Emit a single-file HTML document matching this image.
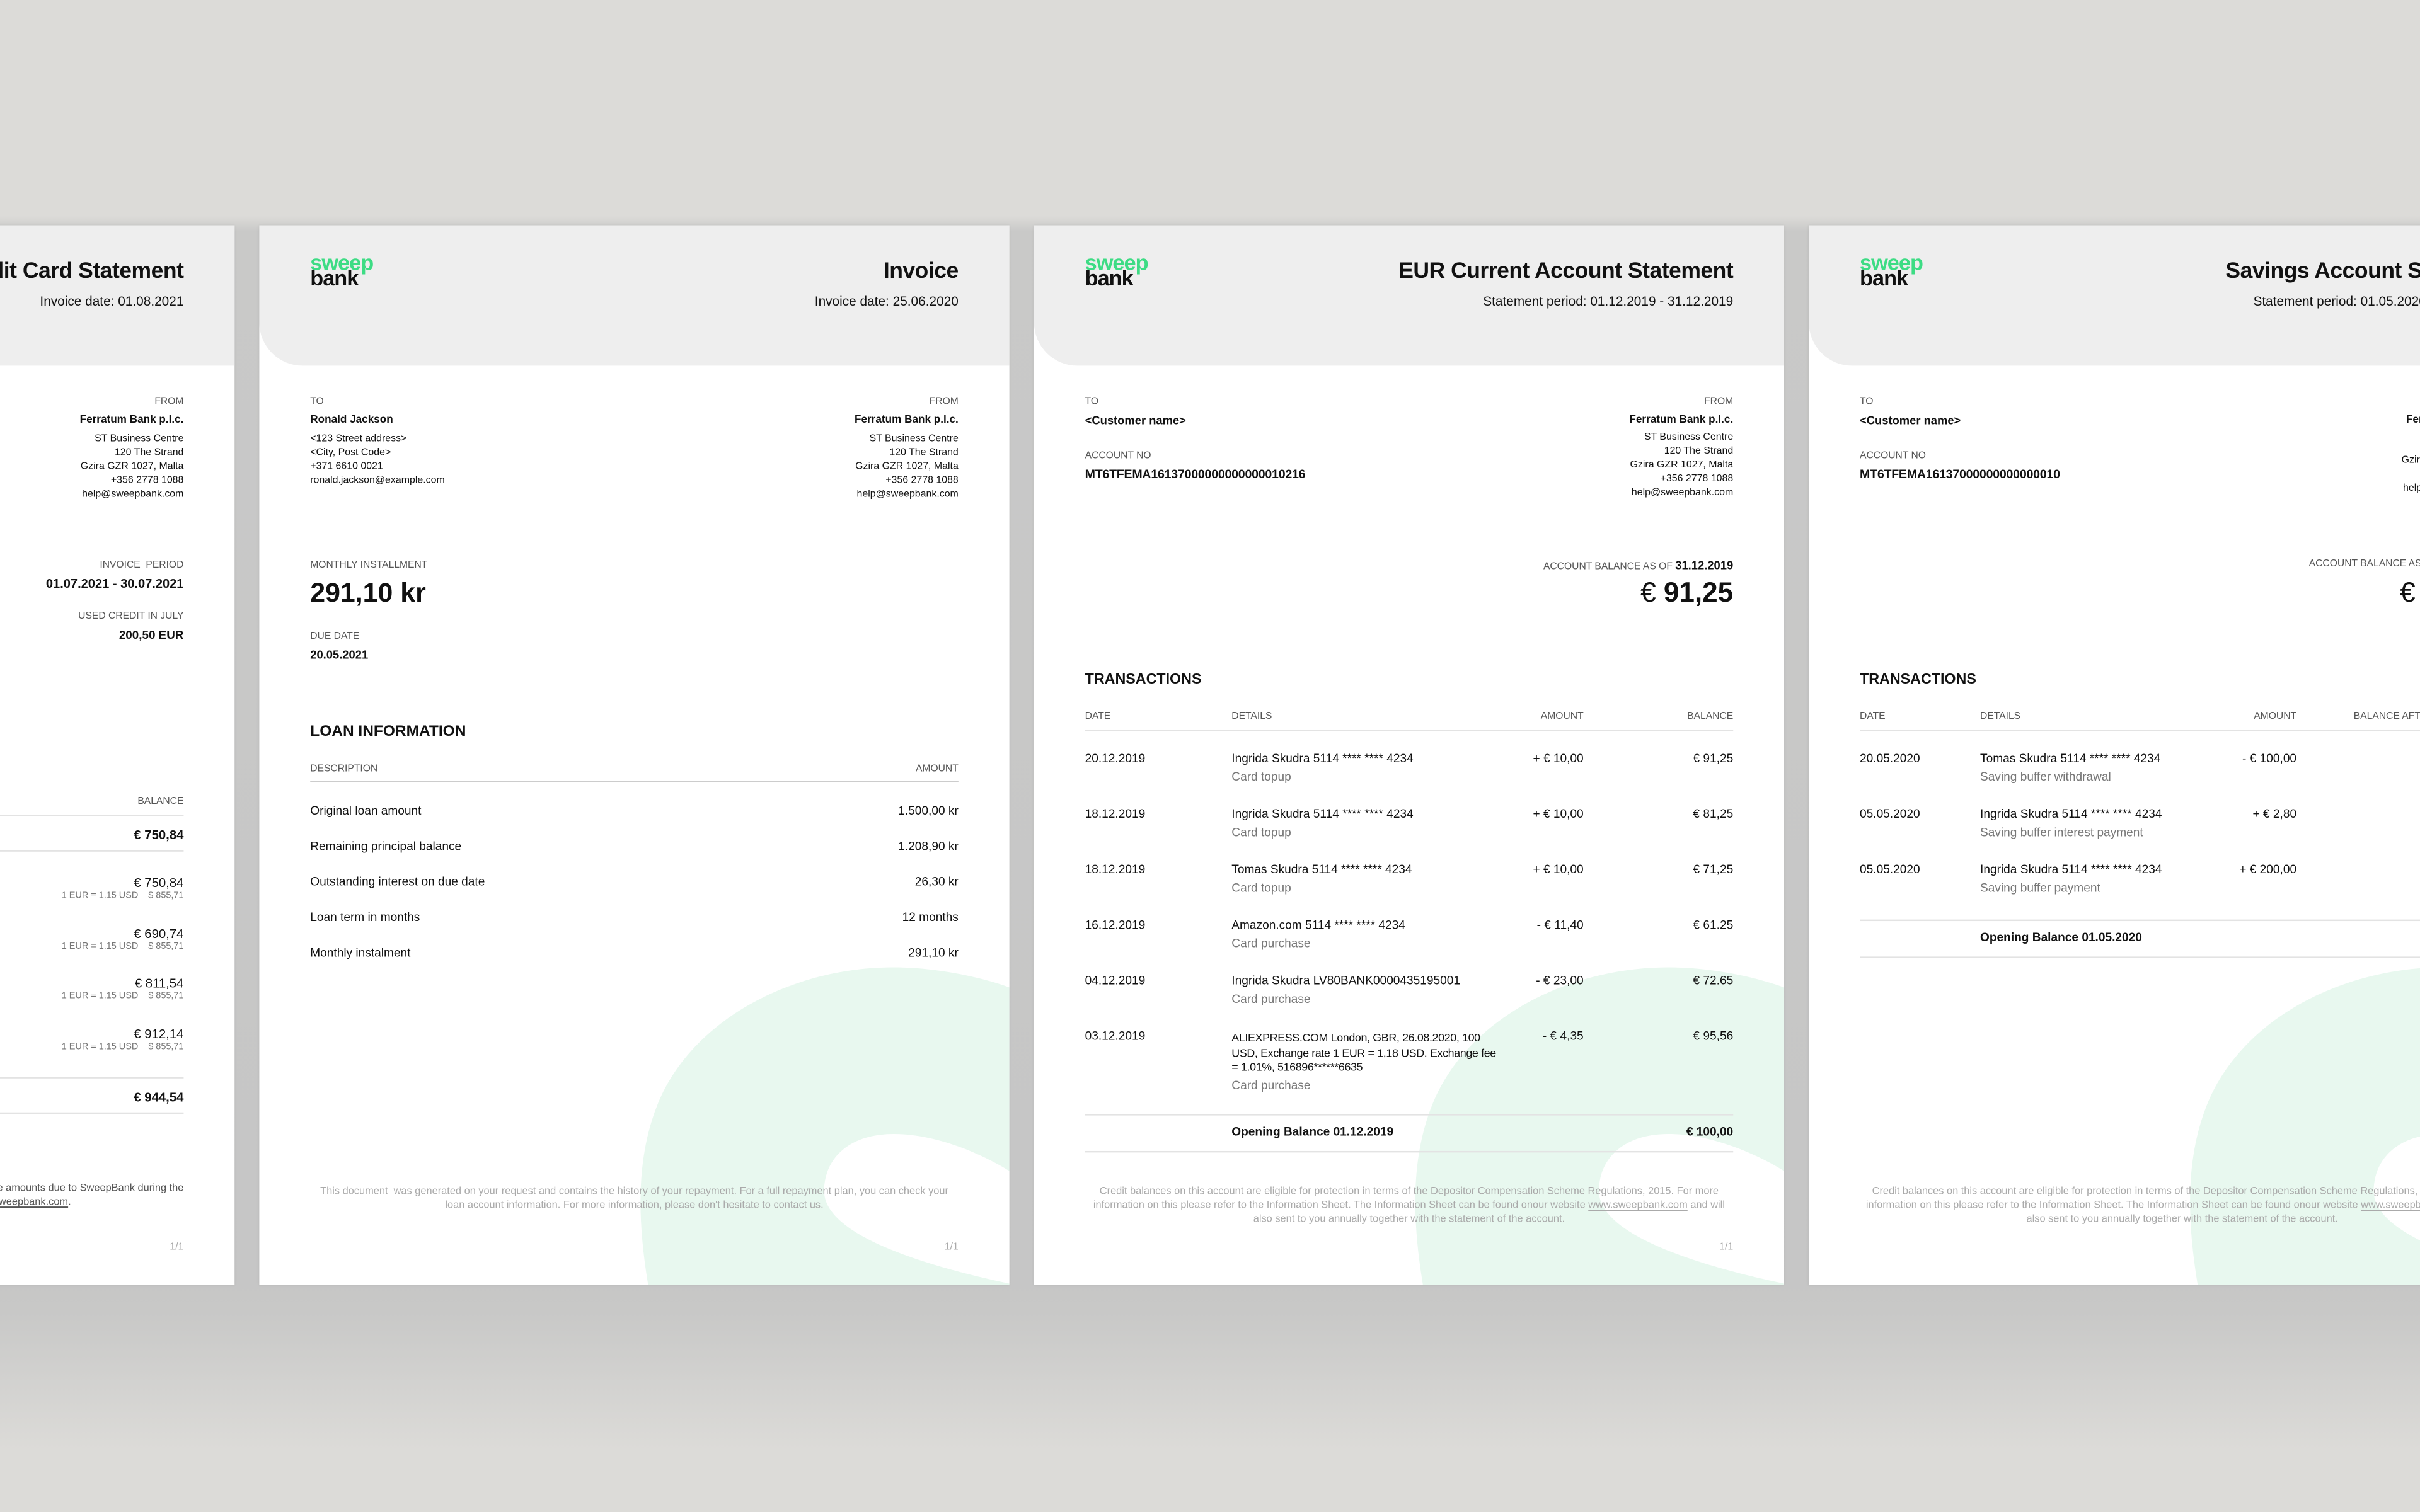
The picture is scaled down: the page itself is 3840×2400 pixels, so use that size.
<!DOCTYPE html>
<html><head><meta charset="utf-8">
<style>
*{margin:0;padding:0;box-sizing:border-box}
html,body{width:3840px;height:2400px;overflow:hidden;background:#dcdbd8}
#w{position:absolute;left:0;top:0;width:1568px;height:980px;transform:scale(2.44898);transform-origin:0 0;font-family:"Liberation Sans",sans-serif;color:#111;
background:linear-gradient(to bottom,#dcdbd8 0,#dcdbd8 140px,#c9c9c8 150px,#c6c6c6 830px,#c8c8c7 850px,#dcdbd8 940px,#dcdbd8 980px)}
.p{position:absolute;top:146px;width:486px;height:687px;background:#fff;overflow:hidden;box-shadow:0 0 2px rgba(0,0,0,.08)}
.hd{position:absolute;left:0;top:0;width:486px;height:91px;background:#eeeeee;border-bottom-left-radius:28px}
.t{position:absolute;white-space:nowrap;line-height:1}
.r{text-align:right}
.logo{position:absolute;left:33px;top:19px;font-weight:bold;font-size:14px;line-height:10px;letter-spacing:-0.4px}
.logo .g{color:#3ddc84;display:block}
.ttl{font-size:14.5px;font-weight:bold;letter-spacing:-0.2px}
.sub{font-size:8.5px}
.lb{font-size:6.4px;color:#555}
.b{font-weight:bold}
.s7{font-size:7px}
.s65{font-size:6.5px}
.m{font-size:7.8px}
.gr{color:#777}
.ln{position:absolute;height:1px;background:#e3e3e3}
.ft{position:absolute;font-size:6.7px;color:#aaa;text-align:center;line-height:9px;white-space:nowrap}
svg.wm{position:absolute;left:0;top:0}
</style></head><body><div id="w">

<!-- PAGE 1 -->
<div class="p" style="left:-334px">
<div class="hd"></div>
<div class="t ttl r" style="right:33px;top:23px">Credit Card Statement</div>
<div class="t sub r" style="right:33px;top:45px">Invoice date: 01.08.2021</div>
<div class="t lb r" style="right:33px;top:112px">FROM</div>
<div class="t s7 b r" style="right:33px;top:123px">Ferratum Bank p.l.c.</div>
<div class="t s65 r" style="right:33px;top:134px;line-height:9px">ST Business Centre<br>120 The Strand<br>Gzira GZR 1027, Malta<br>+356 2778 1088<br>help@sweepbank.com</div>
<div class="t lb r" style="right:33px;top:218px">INVOICE&nbsp; PERIOD</div>
<div class="t b r" style="right:33px;top:229px;font-size:8.2px">01.07.2021 - 30.07.2021</div>
<div class="t lb r" style="right:33px;top:251px">USED CREDIT IN JULY</div>
<div class="t b r" style="right:33px;top:262px;font-size:7.7px">200,50 EUR</div>
<div class="t lb r" style="right:33px;top:371px">BALANCE</div>
<div class="ln" style="left:0;width:453px;top:382px"></div>
<div class="t b r" style="right:33px;top:391px;font-size:8.3px">€ 750,84</div>
<div class="ln" style="left:0;width:453px;top:405px"></div>
<div class="t r" style="right:33px;top:422px;font-size:8.3px">€ 750,84</div>
<div class="t r gr" style="right:33px;top:433px;font-size:5.9px">1 EUR = 1.15 USD &nbsp;&nbsp; $ 855,71</div>
<div class="t r" style="right:33px;top:455px;font-size:8.3px">€ 690,74</div>
<div class="t r gr" style="right:33px;top:466px;font-size:5.9px">1 EUR = 1.15 USD &nbsp;&nbsp; $ 855,71</div>
<div class="t r" style="right:33px;top:487px;font-size:8.3px">€ 811,54</div>
<div class="t r gr" style="right:33px;top:498px;font-size:5.9px">1 EUR = 1.15 USD &nbsp;&nbsp; $ 855,71</div>
<div class="t r" style="right:33px;top:520px;font-size:8.3px">€ 912,14</div>
<div class="t r gr" style="right:33px;top:531px;font-size:5.9px">1 EUR = 1.15 USD &nbsp;&nbsp; $ 855,71</div>
<div class="ln" style="left:0;width:453px;top:552px"></div>
<div class="t b r" style="right:33px;top:561px;font-size:8.3px">€ 944,54</div>
<div class="ln" style="left:0;width:453px;top:575px"></div>
<div class="t r" style="right:33px;top:622px;font-size:6.7px;color:#555">You can see all the amounts due to SweepBank during the</div>
<div class="t r" style="right:106px;top:631px;font-size:6.7px;color:#555">period on <u>www.sweepbank.com</u>.</div>
<div class="t r" style="right:33px;top:660px;font-size:6.5px;color:#aaa">1/1</div>
</div>

<!-- PAGE 2 -->
<div class="p" style="left:168px">
<svg class="wm" width="486" height="687"><path d="M252 687 C245 645 244 605 258 570 C280 515 345 481 411 481 C440 481 470 488 486 494 L486 613 C470 603 440 589 411 589 C382 589 366 605 366 626 C366 652 420 672 486 686 L486 687 Z" fill="#e8f8ef"/></svg>
<div class="hd"></div>
<div class="logo"><span class="g">sweep</span>bank</div>
<div class="t ttl r" style="right:33px;top:23px">Invoice</div>
<div class="t sub r" style="right:33px;top:45px">Invoice date: 25.06.2020</div>
<div class="t lb" style="left:33px;top:112px">TO</div>
<div class="t s7 b" style="left:33px;top:123px">Ronald Jackson</div>
<div class="t s65" style="left:33px;top:134px;line-height:9px">&lt;123 Street address&gt;<br>&lt;City, Post Code&gt;<br>+371 6610 0021<br>ronald.jackson@example.com</div>
<div class="t lb r" style="right:33px;top:112px">FROM</div>
<div class="t s7 b r" style="right:33px;top:123px">Ferratum Bank p.l.c.</div>
<div class="t s65 r" style="right:33px;top:134px;line-height:9px">ST Business Centre<br>120 The Strand<br>Gzira GZR 1027, Malta<br>+356 2778 1088<br>help@sweepbank.com</div>
<div class="t lb" style="left:33px;top:218px">MONTHLY INSTALLMENT</div>
<div class="t b" style="left:33px;top:230px;font-size:17.5px">291,10 kr</div>
<div class="t lb" style="left:33px;top:264px">DUE DATE</div>
<div class="t b" style="left:33px;top:275px;font-size:7.5px">20.05.2021</div>
<div class="t b" style="left:33px;top:324px;font-size:10px">LOAN INFORMATION</div>
<div class="t lb" style="left:33px;top:350px">DESCRIPTION</div>
<div class="t lb r" style="right:33px;top:350px">AMOUNT</div>
<div class="ln" style="left:33px;width:420px;top:360px;background:#ccc"></div>
<div class="t m" style="left:33px;top:376px">Original loan amount</div><div class="t m r" style="right:33px;top:376px">1.500,00 kr</div>
<div class="t m" style="left:33px;top:399px">Remaining principal balance</div><div class="t m r" style="right:33px;top:399px">1.208,90 kr</div>
<div class="t m" style="left:33px;top:422px">Outstanding interest on due date</div><div class="t m r" style="right:33px;top:422px">26,30 kr</div>
<div class="t m" style="left:33px;top:445px">Loan term in months</div><div class="t m r" style="right:33px;top:445px">12 months</div>
<div class="t m" style="left:33px;top:468px">Monthly instalment</div><div class="t m r" style="right:33px;top:468px">291,10 kr</div>
<div class="ft" style="left:0;width:486px;top:622px">This document &nbsp;was generated on your request and contains the history of your repayment. For a full repayment plan, you can check your<br>loan account information. For more information, please don't hesitate to contact us.</div>
<div class="t r" style="right:33px;top:660px;font-size:6.5px;color:#aaa">1/1</div>
</div>

<!-- PAGE 3 -->
<div class="p" style="left:670px">
<svg class="wm" width="486" height="687"><path d="M252 687 C245 645 244 605 258 570 C280 515 345 481 411 481 C440 481 470 488 486 494 L486 613 C470 603 440 589 411 589 C382 589 366 605 366 626 C366 652 420 672 486 686 L486 687 Z" fill="#e8f8ef"/></svg>
<div class="hd"></div>
<div class="logo"><span class="g">sweep</span>bank</div>
<div class="t ttl r" style="right:33px;top:23px">EUR Current Account Statement</div>
<div class="t sub r" style="right:33px;top:45px">Statement period: 01.12.2019 - 31.12.2019</div>
<div class="t lb" style="left:33px;top:112px">TO</div>
<div class="t b" style="left:33px;top:123px;font-size:7.5px">&lt;Customer name&gt;</div>
<div class="t lb" style="left:33px;top:147px">ACCOUNT NO</div>
<div class="t b" style="left:33px;top:158px;font-size:8px;letter-spacing:-0.1px">MT6TFEMA16137000000000000010216</div>
<div class="t lb r" style="right:33px;top:112px">FROM</div>
<div class="t s7 b r" style="right:33px;top:123px">Ferratum Bank p.l.c.</div>
<div class="t s65 r" style="right:33px;top:133px;line-height:9px">ST Business Centre<br>120 The Strand<br>Gzira GZR 1027, Malta<br>+356 2778 1088<br>help@sweepbank.com</div>
<div class="t lb r" style="right:33px;top:217px">ACCOUNT BALANCE AS OF <b style="color:#111;font-size:7.5px">31.12.2019</b></div>
<div class="t b r" style="right:33px;top:229px;font-size:18px"><span style="font-weight:normal">€</span> 91,25</div>
<div class="t b" style="left:33px;top:290px;font-size:9.5px">TRANSACTIONS</div>
<div class="t lb" style="left:33px;top:316px">DATE</div>
<div class="t lb" style="left:128px;top:316px">DETAILS</div>
<div class="t lb r" style="right:130px;top:316px">AMOUNT</div>
<div class="t lb r" style="right:33px;top:316px">BALANCE</div>
<div class="ln" style="left:33px;width:420px;top:327px"></div>
<div class="t m" style="left:33px;top:342px">20.12.2019</div><div class="t m" style="left:128px;top:342px">Ingrida Skudra 5114 **** **** 4234</div><div class="t m gr" style="left:128px;top:354px">Card topup</div><div class="t m r" style="right:130px;top:342px">+ € 10,00</div><div class="t m r" style="right:33px;top:342px">€ 91,25</div>
<div class="t m" style="left:33px;top:378px">18.12.2019</div><div class="t m" style="left:128px;top:378px">Ingrida Skudra 5114 **** **** 4234</div><div class="t m gr" style="left:128px;top:390px">Card topup</div><div class="t m r" style="right:130px;top:378px">+ € 10,00</div><div class="t m r" style="right:33px;top:378px">€ 81,25</div>
<div class="t m" style="left:33px;top:414px">18.12.2019</div><div class="t m" style="left:128px;top:414px">Tomas Skudra 5114 **** **** 4234</div><div class="t m gr" style="left:128px;top:426px">Card topup</div><div class="t m r" style="right:130px;top:414px">+ € 10,00</div><div class="t m r" style="right:33px;top:414px">€ 71,25</div>
<div class="t m" style="left:33px;top:450px">16.12.2019</div><div class="t m" style="left:128px;top:450px">Amazon.com 5114 **** **** 4234</div><div class="t m gr" style="left:128px;top:462px">Card purchase</div><div class="t m r" style="right:130px;top:450px">- € 11,40</div><div class="t m r" style="right:33px;top:450px">€ 61.25</div>
<div class="t m" style="left:33px;top:486px">04.12.2019</div><div class="t m" style="left:128px;top:486px">Ingrida Skudra LV80BANK0000435195001</div><div class="t m gr" style="left:128px;top:498px">Card purchase</div><div class="t m r" style="right:130px;top:486px">- € 23,00</div><div class="t m r" style="right:33px;top:486px">€ 72.65</div>
<div class="t m" style="left:33px;top:522px">03.12.2019</div><div class="t" style="left:128px;top:522px;line-height:9.7px;font-size:7.3px;letter-spacing:-0.15px">ALIEXPRESS.COM London, GBR, 26.08.2020, 100<br>USD, Exchange rate 1 EUR = 1,18 USD. Exchange fee<br>= 1.01%, 516896******6635</div><div class="t m gr" style="left:128px;top:554px">Card purchase</div><div class="t m r" style="right:130px;top:522px">- € 4,35</div><div class="t m r" style="right:33px;top:522px">€ 95,56</div>
<div class="ln" style="left:33px;width:420px;top:576px"></div>
<div class="t m b" style="left:128px;top:584px">Opening Balance 01.12.2019</div><div class="t m b r" style="right:33px;top:584px">€ 100,00</div>
<div class="ln" style="left:33px;width:420px;top:600px"></div>
<div class="ft" style="left:0;width:486px;top:622px">Credit balances on this account are eligible for protection in terms of the Depositor Compensation Scheme Regulations, 2015. For more<br>information on this please refer to the Information Sheet. The Information Sheet can be found onour website <u>www.sweepbank.com</u> and will<br>also sent to you annually together with the statement of the account.</div>
<div class="t r" style="right:33px;top:660px;font-size:6.5px;color:#aaa">1/1</div>
</div>

<!-- PAGE 4 -->
<div class="p" style="left:1172px">
<svg class="wm" width="486" height="687"><path d="M252 687 C245 645 244 605 258 570 C280 515 345 481 411 481 C440 481 470 488 486 494 L486 613 C470 603 440 589 411 589 C382 589 366 605 366 626 C366 652 420 672 486 686 L486 687 Z" fill="#e8f8ef"/></svg>
<div class="hd"></div>
<div class="logo"><span class="g">sweep</span>bank</div>
<div class="t ttl" style="left:270px;top:23px">Savings Account Statement</div>
<div class="t sub" style="left:288px;top:45px">Statement period: 01.05.2020 - 31.05.2020</div>
<div class="t lb" style="left:33px;top:112px">TO</div>
<div class="t b" style="left:33px;top:123px;font-size:7.5px">&lt;Customer name&gt;</div>
<div class="t lb" style="left:33px;top:147px">ACCOUNT NO</div>
<div class="t b" style="left:33px;top:158px;font-size:8px;letter-spacing:-0.1px">MT6TFEMA16137000000000000010</div>
<div class="t s7 b" style="left:387px;top:123px">Ferratum Bank p.l.c.</div>
<div class="t s65" style="left:384px;top:150px">Gzira GZR 1027, Malta</div>
<div class="t s65" style="left:385px;top:168px">help@sweepbank.com</div>
<div class="t lb" style="left:324px;top:217px">ACCOUNT BALANCE AS OF</div>
<div class="t" style="left:383px;top:229px;font-size:18px">€</div>
<div class="t b" style="left:33px;top:290px;font-size:9.5px">TRANSACTIONS</div>
<div class="t lb" style="left:33px;top:316px">DATE</div>
<div class="t lb" style="left:111px;top:316px">DETAILS</div>
<div class="t lb r" style="right:170px;top:316px">AMOUNT</div>
<div class="t lb" style="left:353px;top:316px">BALANCE AFTER</div>
<div class="ln" style="left:33px;width:460px;top:327px"></div>
<div class="t m" style="left:33px;top:342px">20.05.2020</div><div class="t m" style="left:111px;top:342px">Tomas Skudra 5114 **** **** 4234</div><div class="t m gr" style="left:111px;top:354px">Saving buffer withdrawal</div><div class="t m r" style="right:170px;top:342px">- € 100,00</div>
<div class="t m" style="left:33px;top:378px">05.05.2020</div><div class="t m" style="left:111px;top:378px">Ingrida Skudra 5114 **** **** 4234</div><div class="t m gr" style="left:111px;top:390px">Saving buffer interest payment</div><div class="t m r" style="right:170px;top:378px">+ € 2,80</div>
<div class="t m" style="left:33px;top:414px">05.05.2020</div><div class="t m" style="left:111px;top:414px">Ingrida Skudra 5114 **** **** 4234</div><div class="t m gr" style="left:111px;top:426px">Saving buffer payment</div><div class="t m r" style="right:170px;top:414px">+ € 200,00</div>
<div class="ln" style="left:33px;width:460px;top:450px"></div>
<div class="t m b" style="left:111px;top:458px">Opening Balance 01.05.2020</div>
<div class="ln" style="left:33px;width:460px;top:474px"></div>
<div class="ft" style="left:41px;top:622px;text-align:left">Credit balances on this account are eligible for protection in terms of the Depositor Compensation Scheme Regulations, 2015. For more</div>
<div class="ft" style="left:37px;top:631px;text-align:left">information on this please refer to the Information Sheet. The Information Sheet can be found onour website <u>www.sweepbank.com</u> and will</div>
<div class="ft" style="left:141px;top:640px;text-align:left">also sent to you annually together with the statement of the account.</div>
</div>

</div></body></html>
